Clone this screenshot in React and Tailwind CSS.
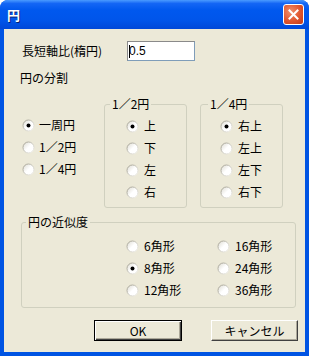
import React from 'react';

const Radio = ({ checked }) => (
    <svg width="13" height="13" viewBox="0 0 13 13" className="shrink-0">
        <defs>
            <linearGradient id="rg" x1="0" y1="0" x2="1" y2="1">
                <stop offset="0" stopColor="#9d9a8c" />
                <stop offset="1" stopColor="#f4f3ee" />
            </linearGradient>
            <linearGradient id="rf" x1="0" y1="0" x2="1" y2="1">
                <stop offset="0" stopColor="#dcdad0" />
                <stop offset="0.5" stopColor="#ffffff" />
            </linearGradient>
        </defs>
        <circle cx="6.5" cy="6.5" r="5.5" fill="url(#rf)" stroke="url(#rg)" strokeWidth="1" />
        {checked && <circle cx="6.5" cy="6.5" r="2" fill="#000" />}
    </svg>
);

const Option = ({ label, checked, gap = 'gap-[4px]' }) => (
    <div className={`flex items-center h-[22px] ${gap}`}>
        <Radio checked={checked} />
        <span>{label}</span>
    </div>
);

const Group = ({ title, className, legendClass, children }) => (
    <fieldset className={`border border-[#d0d0bf] rounded-[3px] ${className}`}>
        <legend className={`px-[2px] leading-[14px] ${legendClass}`}>{title}</legend>
        {children}
    </fieldset>
);

export default function App() {
    return (
        <div
            className="w-[309px] h-[356px] flex flex-col bg-[#0054e3] rounded-t-[8px] text-[12px] text-black"
            style={{ fontFamily: '"Noto Sans CJK JP", "Noto Sans", sans-serif' }}
        >
            {/* title bar */}
            <div className="h-[29px] shrink-0 rounded-t-[8px] bg-[linear-gradient(to_bottom,#4a9bff_0%,#1466f5_12%,#0058ee_35%,#0055ea_70%,#0048d8_100%)] flex items-center pl-[7px] pr-[5px]">
                <span className="text-white font-bold text-[13px] leading-none [text-shadow:1px_1px_#0a1e6e]">円</span>
                <div className="ml-auto w-[21px] h-[21px] rounded-[3px] border border-white bg-[radial-gradient(circle_at_35%_35%,#f0906c_0%,#e0552e_55%,#c23a18_100%)] flex items-center justify-center">
                    <svg width="11" height="11" viewBox="0 0 11 11">
                        <path d="M1.5 1.5 L9.5 9.5 M9.5 1.5 L1.5 9.5" stroke="#fff" strokeWidth="2" strokeLinecap="square" />
                    </svg>
                </div>
            </div>

            {/* client */}
            <div className="flex-1 ml-[4px] mr-[4px] mb-[4px] bg-[#ece9d8] pt-[12px] pl-[18px]">
                <div className="flex items-center h-[20px]">
                    <span className="w-[105px]">長短軸比(楕円)</span>
                    <div className="w-[68px] h-[20px] bg-white border border-[#7f9db9] border-t-[#8a8a8a] border-l-[#8a8a8a] flex items-center pl-[1px]">
                        <span className="w-px h-[13px] bg-black"></span>
                        <span className="-ml-px" style={{ fontFamily: '"Liberation Sans", sans-serif' }}>0.5</span>
                    </div>
                </div>

                <div className="mt-[10px] -ml-[2px] leading-[14px]">円の分割</div>

                <div className="flex mt-[12px]">
                    <div className="w-[82px] pt-[17px]">
                        <Option label="一周円" checked />
                        <Option label="1／2円" />
                        <Option label="1／4円" />
                    </div>
                    <Group title="1／2円" className="w-[83px] h-[111px]" legendClass="ml-[5px]">
                        <div className="pt-[4px] pl-[21px]">
                            <Option label="上" checked gap="gap-[5px]" />
                            <Option label="下" gap="gap-[5px]" />
                            <Option label="左" gap="gap-[5px]" />
                            <Option label="右" gap="gap-[5px]" />
                        </div>
                    </Group>
                    <Group title="1／4円" className="ml-[13px] w-[83px] h-[111px]" legendClass="ml-[7px]">
                        <div className="pt-[4px] pl-[19px]">
                            <Option label="右上" checked gap="gap-[5px]" />
                            <Option label="左上" gap="gap-[5px]" />
                            <Option label="左下" gap="gap-[5px]" />
                            <Option label="右下" gap="gap-[5px]" />
                        </div>
                    </Group>
                </div>

                <Group title="円の近似度" className="mt-[7px] -ml-px w-[275px] h-[93px]" legendClass="ml-[4px]">
                    <div className="pt-[6px] pl-[104px] flex">
                        <div className="w-[91px]">
                            <Option label="6角形" gap="gap-[5px]" />
                            <Option label="8角形" checked gap="gap-[5px]" />
                            <Option label="12角形" gap="gap-[5px]" />
                        </div>
                        <div>
                            <Option label="16角形" gap="gap-[5px]" />
                            <Option label="24角形" gap="gap-[5px]" />
                            <Option label="36角形" gap="gap-[5px]" />
                        </div>
                    </div>
                </Group>

                <div className="flex mt-[12px] ml-[72px]">
                    <div className="w-[88px] h-[21px] border border-black flex items-center justify-center shadow-[inset_1px_1px_#fff,inset_-1px_-1px_#404040,inset_-2px_-2px_#aca899]">
                        OK
                    </div>
                    <div className="ml-[29px] w-[87px] h-[21px] border border-t-white border-l-white border-b-[#404040] border-r-[#404040] flex items-center justify-center shadow-[inset_-1px_-1px_#aca899]">
                        キャンセル
                    </div>
                </div>
            </div>
        </div>
    );
}
